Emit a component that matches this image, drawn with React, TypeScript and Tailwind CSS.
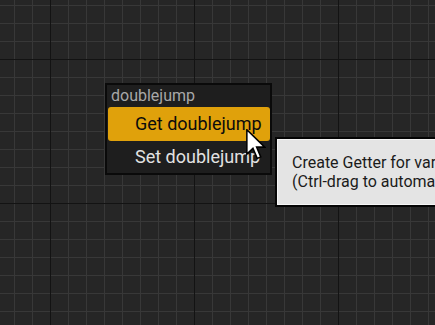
import React from 'react'

const font = { fontFamily: 'Roboto, "Noto Sans", sans-serif' }

function Cursor() {
  return (
    <svg
      viewBox="0 0 13 21"
      className="absolute left-[246px] top-[129px] w-[20px] h-[32px]"
      fill="none"
    >
      <path
        d="M0.5 0.5V16.5L4.5 12.7L7.3 19.3L9.6 18.3L6.9 11.9H12.2Z"
        fill="#ffffff"
        stroke="#000000"
        strokeWidth="1"
        strokeLinejoin="miter"
      />
    </svg>
  )
}

export default function App() {
  return (
    <div
      className="relative w-[435px] h-[325px] overflow-hidden bg-[#262626] [background-image:linear-gradient(to_right,#131313_1px,transparent_1px),linear-gradient(to_bottom,#131313_1px,transparent_1px),linear-gradient(to_right,#383838_1px,transparent_1px),linear-gradient(to_bottom,#383838_1px,transparent_1px)] [background-size:144px_144px,144px_144px,18px_18px,18px_18px] [background-position:50px_59px]"
      style={font}
    >
      {/* Context menu node */}
      <div className="absolute left-[105px] top-[83px] w-[167px] border-2 border-[#0a0a0a] bg-[#1e1e1e] flex flex-col">
        <div className="h-[22px] pl-[4px] flex items-center text-[16px] text-[#a8a8a8] leading-none">
          doublejump
        </div>
        <div className="h-[34px] ml-px rounded-[3px] bg-[#e0a10b] pl-[27px] flex items-center text-[18px] text-[#0c0c0c] leading-none">
          Get doublejump
        </div>
        <div className="h-[32px] pl-[28px] flex items-center text-[18px] text-[#e2e2e2] leading-none">
          Set doublejump
        </div>
      </div>

      {/* Tooltip */}
      <div className="absolute left-[275px] top-[137px] border-2 border-[#050505]">
        <div className="border border-[#f6f6f6] bg-[#e4e4e4] pl-[14px] pr-4 py-[13px] whitespace-nowrap text-[16px] leading-[19px] text-[#1b1b1b]">
          <div>Create Getter for variable 'doublejump'</div>
          <div>(Ctrl-drag to automatically create a getter)</div>
        </div>
      </div>

      <Cursor />
    </div>
  )
}
